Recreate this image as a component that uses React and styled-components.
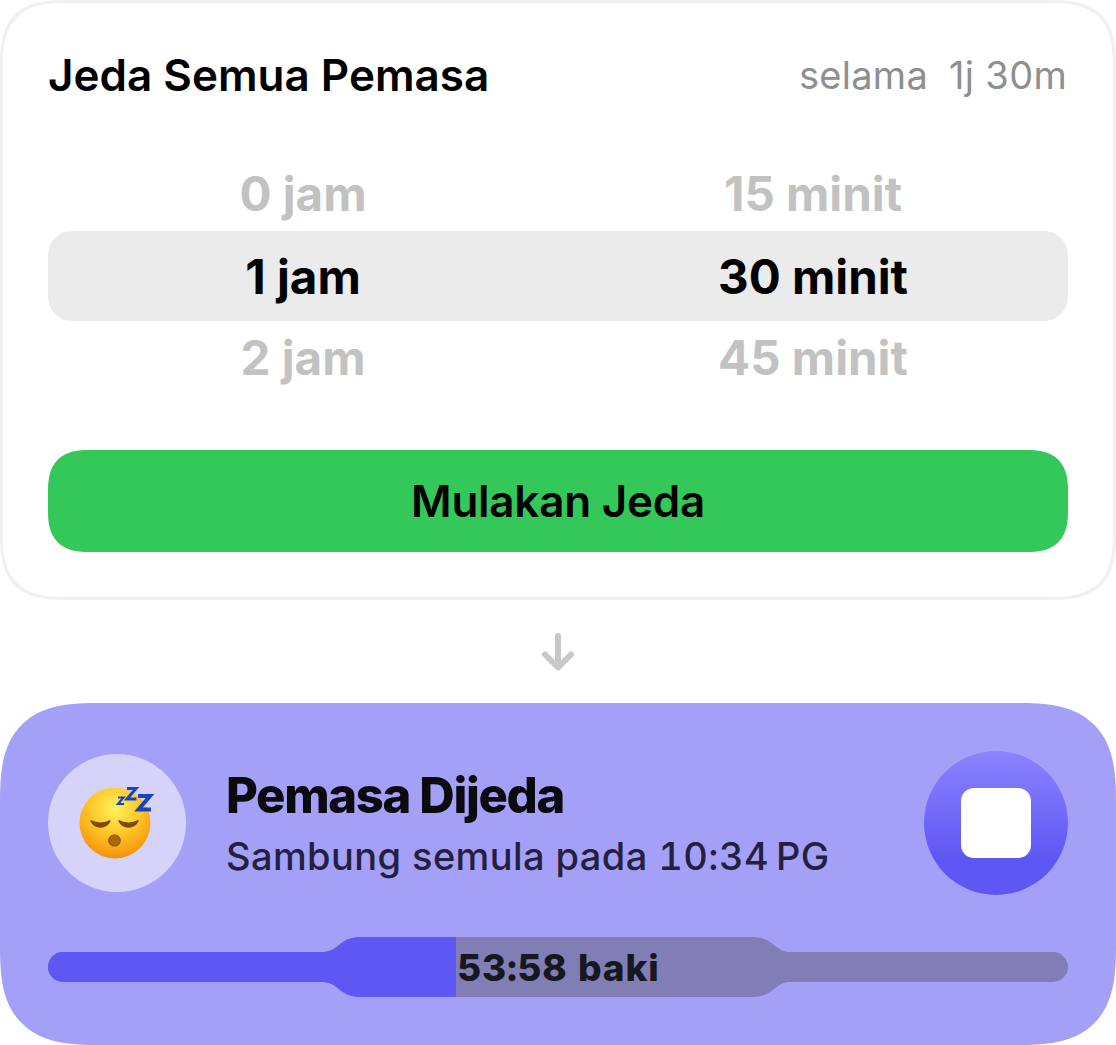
import React from 'react';
import styled, { createGlobalStyle } from 'styled-components';

const GlobalStyle = createGlobalStyle`
    html, body {
        margin: 0;
        padding: 0;
        background: #fff;
    }
    * {
        box-sizing: border-box;
    }
`;

const Page = styled.div`
    width: 1116px;
    height: 1045px;
    display: flex;
    flex-direction: column;
    font-family: Inter, "Liberation Sans", sans-serif;
    color: #000;
`;

const PickerCard = styled.section`
    height: 600px;
    padding: 44px 45px 45px;
    border: 3px solid #f0f0f0;
    border-radius: 68px;
    corner-shape: superellipse(1.5);
    display: flex;
    flex-direction: column;
`;

const CardHeader = styled.div`
    display: flex;
    justify-content: space-between;
    align-items: center;
    height: 56px;
`;

const Title = styled.h2`
    margin: 0;
    font-size: 44px;
    font-weight: 600;
`;

const Duration = styled.div`
    display: flex;
    gap: 21px;
    font-size: 38px;
    letter-spacing: 0.3px;
    color: #8e8e93;
    margin-right: 1px;
`;

const Picker = styled.div`
    margin-top: 52px;
    display: flex;
    flex-direction: column;
`;

const PickerRow = styled.div`
    height: ${p => p.$height}px;
    display: grid;
    grid-template-columns: 1fr 1fr;
    align-items: center;
    text-align: center;
    font-size: 47.5px;
    font-weight: 700;
    color: ${p => (p.$active ? '#000' : '#c2c2c2')};
    background: ${p => (p.$active ? '#ebebeb' : 'transparent')};
    border-radius: 24px;
`;

const StartButton = styled.button`
    margin-top: 57px;
    height: 102px;
    border: 0;
    border-radius: 42px;
    corner-shape: superellipse(1.4);
    background: #34c759;
    color: #000;
    font-family: inherit;
    font-size: 44px;
    font-weight: 600;
    letter-spacing: -0.25px;
`;

const ArrowSlot = styled.div`
    height: 103px;
    display: flex;
    align-items: center;
    justify-content: center;
`;

const PausedCard = styled.section`
    flex: 1;
    padding: 48px;
    background: #a5a0f7;
    border-radius: 100px;
    corner-shape: superellipse(1.5);
    display: flex;
    flex-direction: column;
`;

const PausedRow = styled.div`
    display: flex;
    align-items: center;
    height: 144px;
`;

const Avatar = styled.div`
    width: 138px;
    height: 138px;
    border-radius: 50%;
    background: #d6d3fb;
    display: flex;
    align-items: center;
    justify-content: center;
    flex: none;
`;

const PausedText = styled.div`
    flex: 1;
    margin-left: 40px;
    display: flex;
    flex-direction: column;
    gap: 8px;
    padding-top: 4px;
`;

const PausedTitle = styled.div`
    font-size: 49px;
    font-weight: 800;
    letter-spacing: -1.35px;
    line-height: 54px;
    color: #0a0a0f;
`;

const PausedSub = styled.div`
    font-size: 38px;
    font-weight: 500;
    font-variant-numeric: tabular-nums;
    letter-spacing: 0.4px;
    line-height: 50px;
    color: #23213f;
`;

const StopButton = styled.button`
    width: 144px;
    height: 144px;
    padding: 0;
    border: 0;
    border-radius: 50%;
    background: linear-gradient(180deg, #8b83ff 0%, #5f57f3 75%);
    display: flex;
    align-items: center;
    justify-content: center;
    flex: none;
`;

const StopSquare = styled.span`
    width: 70px;
    height: 70px;
    border-radius: 13px;
    background: #fff;
`;

const Progress = styled.div`
    position: relative;
    margin-top: 42px;
    height: 60px;
`;

const ProgressShape = styled.svg`
    display: block;
`;

const ProgressLabel = styled.div`
    position: absolute;
    inset: 0;
    display: flex;
    align-items: center;
    justify-content: center;
    padding-left: 1px;
    font-size: 37px;
    font-weight: 800;
    font-variant-numeric: tabular-nums;
    letter-spacing: 0.85px;
    color: #17171f;
`;

const BAR_PATH = 'M15 15H275C290 15 292 0 312 0H705C725 0 727 15 742 15H1005A15 15 0 0 1 1005 45H742C727 45 725 60 705 60H312C292 60 290 45 275 45H15A15 15 0 0 1 15 15Z';

const ArrowDown = () => (
    <svg width="34" height="40" viewBox="0 0 34 40" fill="none" stroke="#c8c8c8" strokeWidth="6" strokeLinecap="round" strokeLinejoin="round">
        <path d="M17 4V35" />
        <path d="M4 22.5L17 35.5L30 22.5" />
    </svg>
);

const SleepFace = () => (
    <svg width="80" height="80" viewBox="0 0 80 80">
        <defs>
            <radialGradient id="face" cx="0.5" cy="0.3" r="0.75">
                <stop offset="0" stopColor="#fff35a" />
                <stop offset="0.45" stopColor="#fdc92c" />
                <stop offset="0.85" stopColor="#f79c0e" />
                <stop offset="1" stopColor="#e58a08" />
            </radialGradient>
        </defs>
        <circle cx="38" cy="40" r="35.5" fill="url(#face)" />
        <path d="M14 38C18 46 29 46 33 38C28 41 19 41 14 38Z" fill="#7a4a06" stroke="#7a4a06" strokeWidth="1.5" strokeLinejoin="round" />
        <path d="M42 38C46 46 57 46 61 38C56 41 47 41 42 38Z" fill="#7a4a06" stroke="#7a4a06" strokeWidth="1.5" strokeLinejoin="round" />
        <ellipse cx="37.5" cy="57.5" rx="5.8" ry="5.6" fill="#a96a05" stroke="#7a4a06" strokeWidth="1" />
        <g fill="none" stroke="#1544c4" strokeLinejoin="miter">
            <path d="M41 14.5H46.5L41 21H47" strokeWidth="2.2" />
            <path d="M50 5.5H59L50 16H59.5" strokeWidth="3" />
            <path d="M61 13H73L61.5 26.5H74" strokeWidth="4" />
        </g>
    </svg>
);

const App = () => {
    return (
        <Page>
            <GlobalStyle />
            <PickerCard>
                <CardHeader>
                    <Title>Jeda Semua Pemasa</Title>
                    <Duration>
                        <span>selama</span>
                        <span>1j 30m</span>
                    </Duration>
                </CardHeader>
                <Picker>
                    <PickerRow $height={76}>
                        <span>0 jam</span>
                        <span>15 minit</span>
                    </PickerRow>
                    <PickerRow $height={90} $active>
                        <span>1 jam</span>
                        <span>30 minit</span>
                    </PickerRow>
                    <PickerRow $height={72}>
                        <span>2 jam</span>
                        <span>45 minit</span>
                    </PickerRow>
                </Picker>
                <StartButton>Mulakan Jeda</StartButton>
            </PickerCard>
            <ArrowSlot>
                <ArrowDown />
            </ArrowSlot>
            <PausedCard>
                <PausedRow>
                    <Avatar>
                        <SleepFace />
                    </Avatar>
                    <PausedText>
                        <PausedTitle>Pemasa Dijeda</PausedTitle>
                        <PausedSub>Sambung semula pada 10:34{'\u202F'}PG</PausedSub>
                    </PausedText>
                    <StopButton>
                        <StopSquare />
                    </StopButton>
                </PausedRow>
                <Progress>
                    <ProgressShape width="1020" height="60" viewBox="0 0 1020 60">
                        <defs>
                            <clipPath id="done">
                                <rect x="0" y="0" width="408" height="60" />
                            </clipPath>
                        </defs>
                        <path d={BAR_PATH} fill="#817eb5" />
                        <path d={BAR_PATH} fill="#5f57f3" clipPath="url(#done)" />
                    </ProgressShape>
                    <ProgressLabel>53:58 baki</ProgressLabel>
                </Progress>
            </PausedCard>
        </Page>
    );
};

export default App;
